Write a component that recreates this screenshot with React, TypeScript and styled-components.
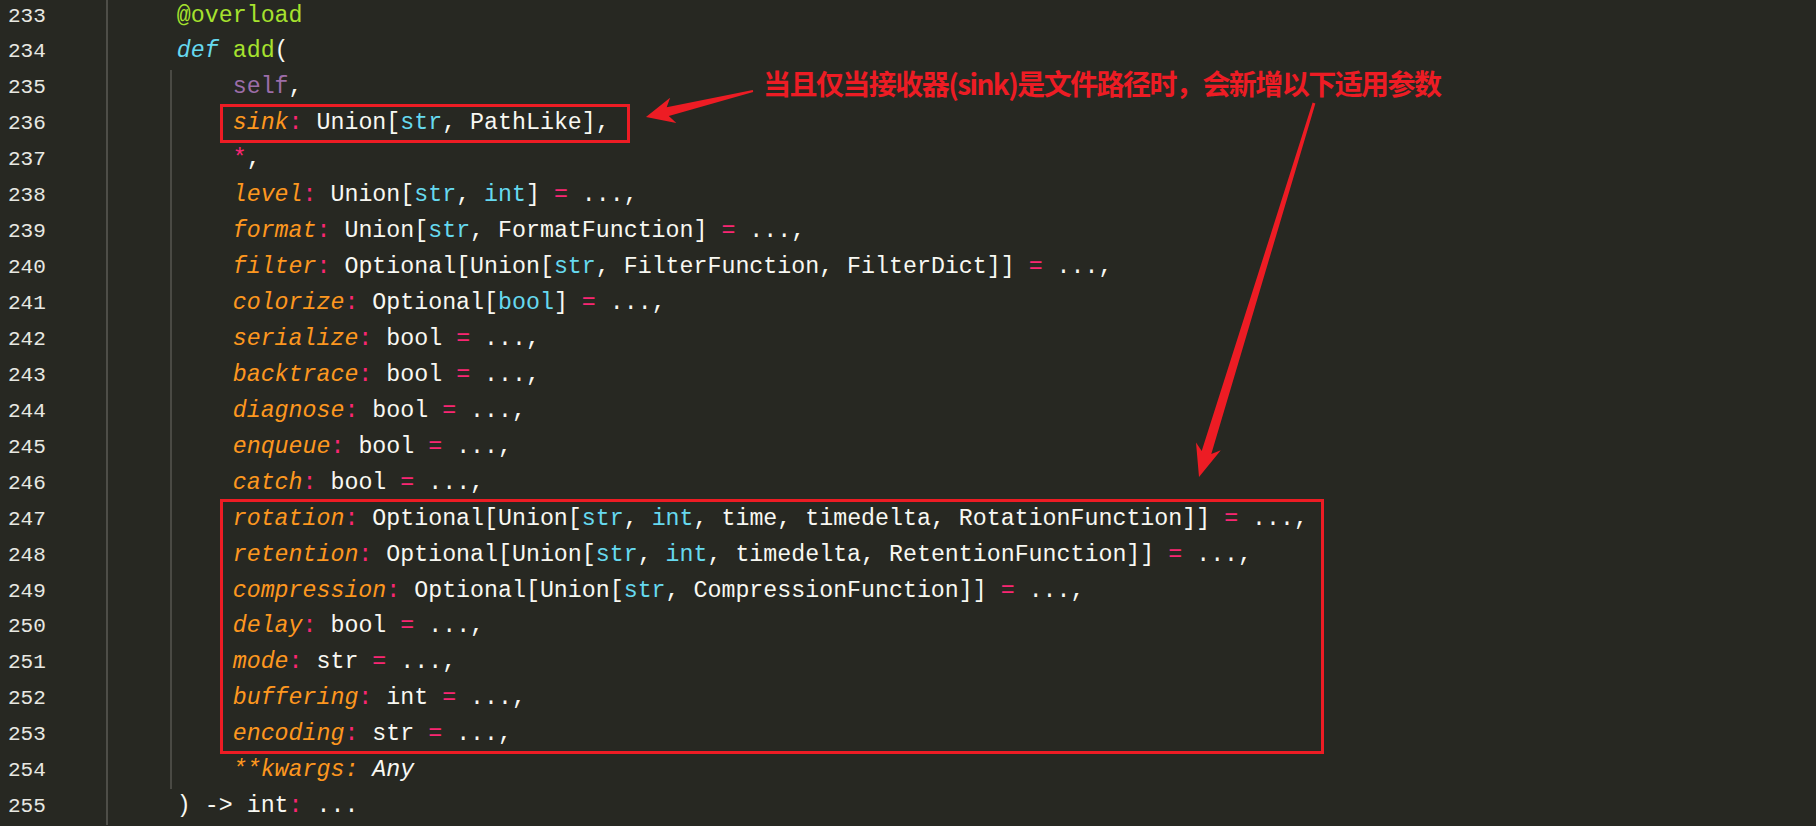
import React from 'react';
import styled, { createGlobalStyle } from 'styled-components';

const C = {
  bg: '#272822',
  fg: '#F8F8F2',
  num: '#E8E8E2',
  green: '#A6E22E',
  cyan: '#66D9EF',
  orange: '#FD971F',
  pink: '#F92672',
  purple: '#9C6DA8',
  red: '#ED1C24',
  rule: '#4E4E48',
  guide: '#4A4A44',
};

const Global = createGlobalStyle`
  html, body { margin: 0; padding: 0; background: ${C.bg}; overflow: hidden; }
  #root { width: 1816px; height: 826px; }
`;

type Kind = 'w' | 'g' | 'c' | 'ci' | 'o' | 'p' | 'pu' | 'wi';
type Tok = [string, Kind];

const colorOf: Record<Kind, string> = {
  w: C.fg, g: C.green, c: C.cyan, ci: C.cyan, o: C.orange, p: C.pink, pu: C.purple, wi: C.fg,
};

const Root = styled.div`
  position: relative;
  width: 1816px;
  height: 826px;
  overflow: hidden;
  background: ${C.bg};
`;

const Editor = styled.div`
  display: flex;
  flex-direction: column;
  margin-top: -1.5px;
`;

/* a run of lines; when $mark is set, a red annotation frame is drawn round it */
const Group = styled.div<{ $mark?: number }>`
  position: relative;
  display: flex;
  flex-direction: column;
  &::after {
    content: '';
    display: ${(p) => (p.$mark ? 'block' : 'none')};
    position: absolute;
    left: 220px;
    top: -2.5px;
    bottom: -0.5px;
    width: ${(p) => p.$mark || 0}px;
    box-sizing: border-box;
    border: 3px solid ${C.red};
    pointer-events: none;
  }
`;

const Line = styled.div`
  display: grid;
  grid-template-columns: 108px 1fr;
  height: 35.95px;
  align-items: stretch;
`;

const LineNo = styled.div`
  border-right: 2px solid ${C.rule};
  padding-left: 8px;
  font-family: 'Liberation Mono', 'DejaVu Sans Mono', monospace;
  font-size: 21px;
  line-height: 35.95px;
  color: ${C.num};
`;

const Code = styled.div<{ $guide: boolean }>`
  padding-left: 13px;
  font-family: 'Liberation Mono', 'DejaVu Sans Mono', monospace;
  font-size: 23.28px;
  line-height: 35.95px;
  white-space: pre;
  color: ${C.fg};
  background: ${(p) => (p.$guide ? `linear-gradient(${C.guide}, ${C.guide}) no-repeat 62px 0 / 2px 100%` : 'none')};
`;

const T = styled.span<{ $k: Kind }>`
  color: ${(p) => colorOf[p.$k]};
  font-style: ${(p) => (p.$k === 'ci' || p.$k === 'o' || p.$k === 'wi' ? 'italic' : 'normal')};
`;

const Overlay = styled.div`
  position: absolute;
  inset: 0;
  pointer-events: none;
`;

const Label = styled.div`
  position: absolute;
  left: 763px;
  top: 69px;
  font-family: 'Noto Sans CJK SC', 'Noto Sans', sans-serif;
  font-weight: 700;
  font-size: 28px;
  line-height: 28px;
  letter-spacing: -1.55px;
  white-space: nowrap;
  color: ${C.red};
`;

const Arrows = styled.svg`
  position: absolute;
  inset: 0;
`;

// ---------- tokenizing helpers ----------
const BUILTIN = new Set(['str', 'int', 'bool']);

function typeToks(t: string): Tok[] {
  const out: Tok[] = [];
  let depth = 0;
  const parts = t.match(/[A-Za-z_]+|\[|\]|,|\s+/g) || [];
  for (const part of parts) {
    if (part === '[') { depth++; out.push([part, 'w']); }
    else if (part === ']') { depth--; out.push([part, 'w']); }
    else if (BUILTIN.has(part) && depth > 0) out.push([part, 'c']);
    else out.push([part, 'w']);
  }
  return out;
}

function param(name: string, type: string): Tok[] {
  return [[name, 'o'], [':', 'p'], [' ', 'w'], ...typeToks(type), [' ', 'w'], ['=', 'p'], [' ...,', 'w']];
}

const I4 = '    ';
const I8 = '        ';

type L = { n: number; toks: Tok[]; guide?: boolean };

const groups: { mark?: number; lines: L[] }[] = [
  {
    lines: [
      { n: 233, toks: [[I4, 'w'], ['@overload', 'g']] },
      { n: 234, toks: [[I4, 'w'], ['def', 'ci'], [' ', 'w'], ['add', 'g'], ['(', 'w']] },
      { n: 235, guide: true, toks: [[I8, 'w'], ['self', 'pu'], [',', 'w']] },
    ],
  },
  {
    mark: 410,
    lines: [
      { n: 236, guide: true, toks: [[I8, 'w'], ['sink', 'o'], [':', 'p'], [' ', 'w'], ...typeToks('Union[str, PathLike]'), [',', 'w']] },
    ],
  },
  {
    lines: [
      { n: 237, guide: true, toks: [[I8, 'w'], ['*', 'p'], [',', 'w']] },
      { n: 238, guide: true, toks: [[I8, 'w'], ...param('level', 'Union[str, int]')] },
      { n: 239, guide: true, toks: [[I8, 'w'], ...param('format', 'Union[str, FormatFunction]')] },
      { n: 240, guide: true, toks: [[I8, 'w'], ...param('filter', 'Optional[Union[str, FilterFunction, FilterDict]]')] },
      { n: 241, guide: true, toks: [[I8, 'w'], ...param('colorize', 'Optional[bool]')] },
      { n: 242, guide: true, toks: [[I8, 'w'], ...param('serialize', 'bool')] },
      { n: 243, guide: true, toks: [[I8, 'w'], ...param('backtrace', 'bool')] },
      { n: 244, guide: true, toks: [[I8, 'w'], ...param('diagnose', 'bool')] },
      { n: 245, guide: true, toks: [[I8, 'w'], ...param('enqueue', 'bool')] },
      { n: 246, guide: true, toks: [[I8, 'w'], ...param('catch', 'bool')] },
    ],
  },
  {
    mark: 1104,
    lines: [
      { n: 247, guide: true, toks: [[I8, 'w'], ...param('rotation', 'Optional[Union[str, int, time, timedelta, RotationFunction]]')] },
      { n: 248, guide: true, toks: [[I8, 'w'], ...param('retention', 'Optional[Union[str, int, timedelta, RetentionFunction]]')] },
      { n: 249, guide: true, toks: [[I8, 'w'], ...param('compression', 'Optional[Union[str, CompressionFunction]]')] },
      { n: 250, guide: true, toks: [[I8, 'w'], ...param('delay', 'bool')] },
      { n: 251, guide: true, toks: [[I8, 'w'], ...param('mode', 'str')] },
      { n: 252, guide: true, toks: [[I8, 'w'], ...param('buffering', 'int')] },
      { n: 253, guide: true, toks: [[I8, 'w'], ...param('encoding', 'str')] },
    ],
  },
  {
    lines: [
      { n: 254, guide: true, toks: [[I8, 'w'], ['**kwargs:', 'o'], [' ', 'w'], ['Any', 'wi']] },
      { n: 255, toks: [[I4, 'w'], [') -> int', 'w'], [':', 'p'], [' ...', 'w']] },
    ],
  },
];

// ---------- arrow geometry ----------
type P = [number, number];
function arrowPoints(tail: P, tip: P, headLen: number, half: number, tailW: number, neckW: number): string {
  const dx = tip[0] - tail[0];
  const dy = tip[1] - tail[1];
  const len = Math.hypot(dx, dy);
  const ux = dx / len, uy = dy / len;
  const nx = -uy, ny = ux;
  const bx = tip[0] - ux * headLen, by = tip[1] - uy * headLen;
  const kx = tip[0] - ux * headLen * 0.8, ky = tip[1] - uy * headLen * 0.8;
  const pts: P[] = [
    [tail[0] + nx * tailW / 2, tail[1] + ny * tailW / 2],
    [kx + nx * neckW / 2, ky + ny * neckW / 2],
    [bx + nx * half, by + ny * half],
    tip,
    [bx - nx * half, by - ny * half],
    [kx - nx * neckW / 2, ky - ny * neckW / 2],
    [tail[0] - nx * tailW / 2, tail[1] - ny * tailW / 2],
  ];
  return pts.map((p) => `${p[0].toFixed(1)},${p[1].toFixed(1)}`).join(' ');
}

export default function App() {
  return (
    <Root>
      <Global />
      <Editor>
        {groups.map((g, gi) => (
          <Group key={gi} $mark={g.mark}>
            {g.lines.map((l) => (
              <Line key={l.n}>
                <LineNo>{l.n}</LineNo>
                <Code $guide={!!l.guide}>
                  {l.toks.map((t, i) => (
                    <T key={i} $k={t[1]}>{t[0]}</T>
                  ))}
                </Code>
              </Line>
            ))}
          </Group>
        ))}
      </Editor>
      <Overlay>
        <Label>当且仅当接收器(sink)是文件路径时，会新增以下适用参数</Label>
        <Arrows width={1816} height={826} viewBox="0 0 1816 826">
          <polygon points={arrowPoints([753, 91], [646, 117], 28, 13, 2, 9)} fill={C.red} />
          <polygon points={arrowPoints([1314, 103], [1199, 477], 32, 13, 3, 10)} fill={C.red} />
        </Arrows>
      </Overlay>
    </Root>
  );
}
